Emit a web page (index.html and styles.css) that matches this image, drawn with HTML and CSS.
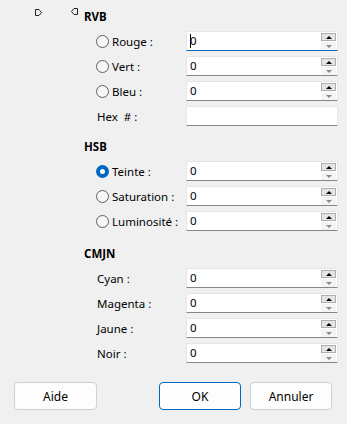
FILE: index.html
```html
<!DOCTYPE html>
<html lang="fr">
<head>
    <meta charset="UTF-8">
    <meta name="viewport" content="width=device-width, initial-scale=1.0">
    <title>Couleurs</title>
    <link rel="stylesheet" href="styles.css">
</head>
<body>
<div class="dialog">
    <div class="content">
        <div class="rail">
            <svg class="marker" width="9" height="9" viewBox="0 0 9 9"><path d="M1.5 1.5H5L7.5 4.5L5 7.5H1.5Z" fill="none" stroke="#222" stroke-width="1"/></svg>
            <svg class="marker" width="9" height="9" viewBox="0 0 9 9"><path d="M7.5 0.5H4L1.5 3.5L4 6.5H7.5Z" fill="none" stroke="#222" stroke-width="1"/></svg>
        </div>
        <div class="main">
            <div class="group">
                <div class="group-title">RVB</div>
                <div class="rows">
                    <div class="label"><span class="radio"></span>Rouge :</div>
                    <div class="field focused">
                        <span class="value"><span class="caret"></span>0</span>
                        <span class="spin"><span class="spin-up"><i class="arrow-up"></i></span><span class="spin-down"><i class="arrow-down"></i></span></span>
                    </div>
                    <div class="label"><span class="radio"></span>Vert :</div>
                    <div class="field">
                        <span class="value">0</span>
                        <span class="spin"><span class="spin-up"><i class="arrow-up"></i></span><span class="spin-down"><i class="arrow-down"></i></span></span>
                    </div>
                    <div class="label"><span class="radio"></span>Bleu :</div>
                    <div class="field">
                        <span class="value">0</span>
                        <span class="spin"><span class="spin-up"><i class="arrow-up"></i></span><span class="spin-down"><i class="arrow-down"></i></span></span>
                    </div>
                    <div class="label plain">Hex&nbsp; # :</div>
                    <div class="field"><span class="value"></span></div>
                </div>
            </div>
            <div class="group">
                <div class="group-title">HSB</div>
                <div class="rows">
                    <div class="label"><span class="radio checked"></span>Teinte :</div>
                    <div class="field">
                        <span class="value">0</span>
                        <span class="spin"><span class="spin-up"><i class="arrow-up"></i></span><span class="spin-down"><i class="arrow-down"></i></span></span>
                    </div>
                    <div class="label"><span class="radio"></span>Saturation :</div>
                    <div class="field">
                        <span class="value">0</span>
                        <span class="spin"><span class="spin-up"><i class="arrow-up"></i></span><span class="spin-down"><i class="arrow-down"></i></span></span>
                    </div>
                    <div class="label"><span class="radio"></span>Luminosité :</div>
                    <div class="field">
                        <span class="value">0</span>
                        <span class="spin"><span class="spin-up"><i class="arrow-up"></i></span><span class="spin-down"><i class="arrow-down"></i></span></span>
                    </div>
                </div>
            </div>
            <div class="group last">
                <div class="group-title">CMJN</div>
                <div class="rows">
                    <div class="label plain">Cyan :</div>
                    <div class="field">
                        <span class="value">0</span>
                        <span class="spin"><span class="spin-up"><i class="arrow-up"></i></span><span class="spin-down"><i class="arrow-down"></i></span></span>
                    </div>
                    <div class="label plain">Magenta :</div>
                    <div class="field">
                        <span class="value">0</span>
                        <span class="spin"><span class="spin-up"><i class="arrow-up"></i></span><span class="spin-down"><i class="arrow-down"></i></span></span>
                    </div>
                    <div class="label plain">Jaune :</div>
                    <div class="field">
                        <span class="value">0</span>
                        <span class="spin"><span class="spin-up"><i class="arrow-up"></i></span><span class="spin-down"><i class="arrow-down"></i></span></span>
                    </div>
                    <div class="label plain">Noir :</div>
                    <div class="field">
                        <span class="value">0</span>
                        <span class="spin"><span class="spin-up"><i class="arrow-up"></i></span><span class="spin-down"><i class="arrow-down"></i></span></span>
                    </div>
                </div>
            </div>
        </div>
    </div>
    <div class="buttons">
        <button class="button">Aide</button>
        <div class="btn-group">
            <button class="button default">OK</button>
            <button class="button">Annuler</button>
        </div>
    </div>
</div>
</body>
</html>
```

FILE: styles.css
```css
body{
    margin: 0;
    background: #f0f0f0;
    font-family: "Noto Sans", "Open Sans", sans-serif;
    font-size: 11.5px;
    color: #000;
}
.dialog{
    width: 347px;
    height: 424px;
}
.content{
    display: flex;
}
.rail{
    width: 84px;
    display: flex;
    align-items: flex-start;
    padding-top: 8px;
    padding-left: 34px;
    gap: 27px;
    box-sizing: border-box;
}
.marker{
    display: block;
}
.main{
    width: 254px;
}
.group-title{
    font-weight: bold;
    height: 20px;
    line-height: 20px;
    margin-top: 11px;
    margin-bottom: 4px;
}
.group:first-child .group-title{
    margin-top: 7px;
}
.group.last .group-title{
    margin-top: 13px;
}
.rows{
    display: grid;
    grid-template-columns: 90px 152px;
    row-gap: 5px;
    padding-left: 12px;
}
.label{
    height: 20px;
    display: flex;
    align-items: center;
    white-space: nowrap;
}
.label.plain{
    padding-left: 1px;
}
.radio{
    width: 13px;
    height: 13px;
    box-sizing: border-box;
    border: 1px solid #5f5f5f;
    border-radius: 50%;
    background: #f7f7f7;
    margin-right: 3px;
    flex-shrink: 0;
}
.radio.checked{
    border: 4px solid #0067c0;
    background: #fff;
}
.field{
    height: 20px;
    box-sizing: border-box;
    background: #fff;
    border: 1px solid #e6e6e6;
    border-bottom: 1px solid #868686;
    display: flex;
    align-items: flex-start;
}
.field.focused{
    border-bottom-color: #0067c0;
}
.value{
    flex: 1;
    height: 18px;
    line-height: 18px;
    padding-left: 3px;
    display: flex;
    align-items: center;
}
.caret{
    width: 1px;
    height: 14px;
    background: #000;
    margin-right: -1px;
}
.spin{
    width: 15px;
    margin-top: 1px;
    margin-right: 1px;
    display: flex;
    flex-direction: column;
    gap: 1px;
}
.spin-up{
    height: 8px;
    box-sizing: border-box;
    border: 1px solid #adadad;
    background: #e5e5e5;
    display: flex;
    align-items: center;
    justify-content: center;
}
.spin-down{
    height: 8px;
    background: #f4f4f4;
    display: flex;
    align-items: center;
    justify-content: center;
}
.arrow-up{
    width: 0;
    height: 0;
    border-left: 3px solid transparent;
    border-right: 3px solid transparent;
    border-bottom: 3px solid #000;
}
.arrow-down{
    width: 0;
    height: 0;
    border-left: 3px solid transparent;
    border-right: 3px solid transparent;
    border-top: 3px solid #8a8a8a;
}
.buttons{
    display: flex;
    justify-content: space-between;
    padding: 0 15px 0 14px;
    margin-top: 19px;
}
.btn-group{
    display: flex;
    gap: 9px;
}
.button{
    width: 82px;
    height: 28px;
    box-sizing: border-box;
    background: #fdfdfd;
    border: 1px solid #d0d0d0;
    border-radius: 4px;
    font-family: "Noto Sans", "Open Sans", sans-serif;
    font-size: 12px;
    color: #000;
    padding: 0;
}
.buttons > .button{
    width: 83px;
}
.button.default{
    border-color: #0067c0;
}
```
